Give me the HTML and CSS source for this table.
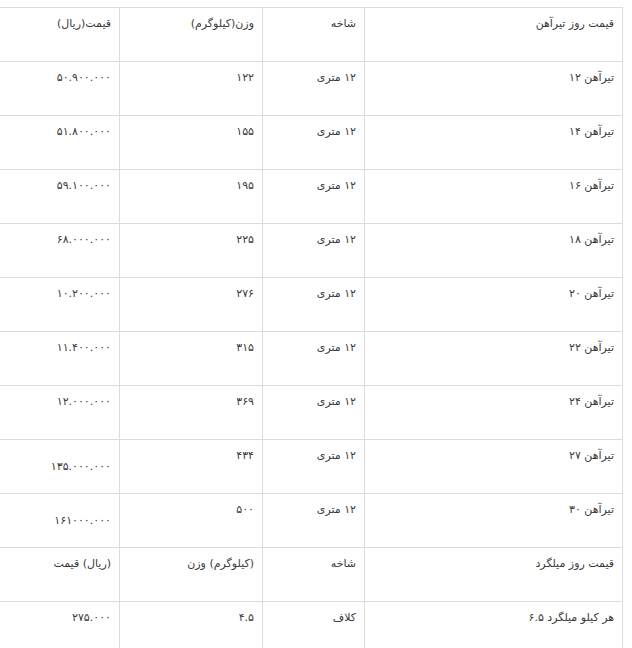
FILE: index.html
```html
<!DOCTYPE html>
<html lang="fa" dir="rtl">
<head>
<meta charset="utf-8">
<link rel="stylesheet" href="styles.css">
</head>
<body>
<div class="wrap">
<table class="price-table">
<colgroup>
<col class="c-name"><col class="c-branch"><col class="c-weight"><col class="c-price">
</colgroup>
<tbody>
<tr><td>قیمت روز تیرآهن</td><td>شاخه</td><td>وزن(کیلوگرم)</td><td>قیمت(ریال)</td></tr>
<tr><td>تیرآهن ۱۲</td><td>۱۲ متری</td><td>۱۲۲</td><td>۵۰.۹۰۰.۰۰۰</td></tr>
<tr><td>تیرآهن ۱۴</td><td>۱۲ متری</td><td>۱۵۵</td><td>۵۱.۸۰۰.۰۰۰</td></tr>
<tr><td>تیرآهن ۱۶</td><td>۱۲ متری</td><td>۱۹۵</td><td>۵۹.۱۰۰.۰۰۰</td></tr>
<tr><td>تیرآهن ۱۸</td><td>۱۲ متری</td><td>۲۲۵</td><td>۶۸.۰۰۰.۰۰۰</td></tr>
<tr><td>تیرآهن ۲۰</td><td>۱۲ متری</td><td>۲۷۶</td><td>۱۰.۲۰۰.۰۰۰</td></tr>
<tr><td>تیرآهن ۲۲</td><td>۱۲ متری</td><td>۳۱۵</td><td>۱۱.۴۰۰.۰۰۰</td></tr>
<tr><td>تیرآهن ۲۴</td><td>۱۲ متری</td><td>۳۶۹</td><td>۱۲.۰۰۰.۰۰۰</td></tr>
<tr><td>تیرآهن ۲۷</td><td>۱۲ متری</td><td>۴۳۴</td><td class="mid">۱۳۵.۰۰۰.۰۰۰</td></tr>
<tr><td>تیرآهن ۳۰</td><td>۱۲ متری</td><td>۵۰۰</td><td class="mid">۱۶۱۰۰۰.۰۰۰</td></tr>
<tr><td>قیمت روز میلگرد</td><td>شاخه</td><td>(کیلوگرم) وزن</td><td>(ریال) قیمت</td></tr>
<tr><td>هر کیلو میلگرد ۶.۵</td><td>کلاف</td><td>۴.۵</td><td>۲۷۵.۰۰۰</td></tr>
</tbody>
</table>
</div>
</body>
</html>
```
FILE: styles.css
```css
html, body {
  margin: 0;
  padding: 0;
  background: #fff;
}
body {
  font-family: "DejaVu Sans", Tahoma, sans-serif;
  font-size: 11px;
  color: #3a3a3a;
}
.wrap {
  overflow: hidden;
  padding: 7px 9px 0 0;
}
.price-table {
  border-collapse: collapse;
  table-layout: fixed;
  width: 680px;
}
.c-name { width: 258px; }
.c-branch { width: 102px; }
.c-weight { width: 143px; }
.c-price { width: 177px; }
.price-table td {
  border: 1px solid #dcdcdc;
  height: 54px;
  box-sizing: border-box;
  padding: 6px 8px 6px 10px;
  line-height: 19px;
  vertical-align: top;
  text-align: right;
}
.price-table td.mid {
  vertical-align: middle;
}
```
